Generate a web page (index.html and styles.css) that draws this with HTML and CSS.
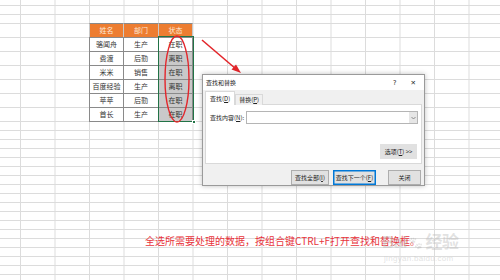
FILE: index.html
```html
<!DOCTYPE html>
<html lang="zh">
<head>
<meta charset="utf-8">
<link rel="stylesheet" href="styles.css">
</head>
<body>
<div class="sheet">
  <div class="row first"></div>
  <div class="row"></div>
  <div class="row"></div>
  <div class="trow">
    <div class="cell hd">姓名</div><div class="cell hd">部门</div><div class="cell hd">状态</div>
  </div>
  <div class="trow">
    <div class="cell">骆闻舟</div><div class="cell">生产</div><div class="cell">在职</div>
  </div>
  <div class="trow">
    <div class="cell">费渡</div><div class="cell">后勤</div><div class="cell sel">离职</div>
  </div>
  <div class="trow">
    <div class="cell">米米</div><div class="cell">销售</div><div class="cell sel">在职</div>
  </div>
  <div class="trow">
    <div class="cell">百度经验</div><div class="cell">生产</div><div class="cell sel">离职</div>
  </div>
  <div class="trow">
    <div class="cell">苹苹</div><div class="cell">后勤</div><div class="cell sel">在职</div>
  </div>
  <div class="trow">
    <div class="cell">首长</div><div class="cell">生产</div><div class="cell sel">在职</div>
  </div>
  <div class="row"></div><div class="row"></div><div class="row"></div><div class="row"></div>
  <div class="row"></div><div class="row"></div><div class="row"></div><div class="row"></div>
  <div class="row"></div><div class="row"></div><div class="row"></div><div class="row"></div>
  <div class="row"></div><div class="row"></div><div class="row"></div><div class="row"></div>
  <div class="row"></div><div class="row"></div>

  <div class="selection"><span class="handle"></span></div>

  <svg class="marks" width="500" height="280" viewBox="0 0 500 280">
    <ellipse cx="177" cy="79" rx="12" ry="43" fill="none" stroke="#e3262b" stroke-width="1.4"/>
    <line x1="202" y1="40" x2="236" y2="69" stroke="#e3262b" stroke-width="1.6"/>
    <polygon points="241,73 231.5,69.5 236,64.5" fill="#e3262b"/>
  </svg>

  <div class="dialog">
    <div class="titlebar">
      <span class="title">查找和替换</span>
      <span class="tb-btns"><span class="help">?</span><span class="x">✕</span></span>
    </div>
    <div class="dbody">
      <div class="tabs">
        <span class="tab active">查找(<u>D</u>)</span><span class="tab">替换(<u>P</u>)</span>
      </div>
      <div class="panel">
        <div class="field">
          <span class="label">查找内容(<u>N</u>):</span>
          <div class="combo"><span class="drop"><svg width="5" height="4" viewBox="0 0 5 4"><path d="M0.5 1 L2.5 3 L4.5 1" fill="none" stroke="#777" stroke-width="0.8"/></svg></span></div>
        </div>
        <div class="opts"><span class="btn optbtn">选项(<u>T</u>) &gt;&gt;</span></div>
      </div>
      <div class="actions">
        <span class="btn b1">查找全部(<u>I</u>)</span>
        <span class="btn b2 primary">查找下一个(<u>F</u>)</span>
        <span class="btn b3">关闭</span>
      </div>
    </div>
  </div>

  <p class="caption">全选所需要处理的数据，按组合键CTRL+F打开查找和替换框。</p>

  <div class="watermark">
    <div class="wm-logo">Bai<span class="paw">🐾</span>经验</div>
    <div class="wm-url">jingyan.baidu.com</div>
  </div>
</div>
</body>
</html>
```
FILE: styles.css
```css
* { box-sizing: border-box; }
html, body { margin: 0; padding: 0; }
body {
  width: 500px;
  height: 280px;
  overflow: hidden;
  background: #fff;
  font-family: "Noto Sans CJK SC", "Noto Sans", sans-serif;
}
.sheet {
  position: relative;
  width: 500px;
  height: 280px;
  overflow: hidden;
  background-color: #fff;
  background-image: linear-gradient(to right, #dcdcdc 1px, transparent 1px);
  background-size: 34.5px 100%;
  background-position: 20px 0;
}
.row {
  height: 9px;
  border-bottom: 1px solid #dcdcdc;
}
.row.first { height: 6px; }
.trow {
  height: 14px;
  border-bottom: 1px solid #dcdcdc;
  display: flex;
  padding-left: 89px;
}
.cell {
  width: 35px;
  height: 15px;
  margin-top: -1px;
  border: 1px solid #8a8a8a;
  border-left: none;
  background: #fff;
  color: #333;
  font-size: 7px;
  line-height: 13px;
  text-align: center;
  white-space: nowrap;
}
.cell:first-child { border-left: 1px solid #8a8a8a; }
.cell:last-child { width: 34px; }
.cell.hd {
  background: #ed7d31;
  color: #fde9d9;
  border-color: #c9c9c9;
  border-top-color: #8a8a8a;
}
.cell.sel { background: #c9c9c9; }

.selection {
  position: absolute;
  left: 158px;
  top: 36px;
  width: 36px;
  height: 86px;
  border: 1.5px solid #217346;
}
.handle {
  position: absolute;
  right: -3px;
  bottom: -3px;
  width: 4px;
  height: 4px;
  background: #217346;
  border: 1px solid #fff;
}
.marks {
  position: absolute;
  left: 0;
  top: 0;
}

/* dialog */
.dialog {
  position: absolute;
  left: 202px;
  top: 74px;
  width: 223px;
  height: 112px;
  background: #f0f0f0;
  border: 1px solid #9a9a9a;
  box-shadow: 0 0 5px rgba(0, 0, 0, 0.25);
  font-size: 6px;
  color: #222;
  display: flex;
  flex-direction: column;
}
.titlebar {
  height: 15px;
  background: #fff;
  display: flex;
  align-items: center;
  justify-content: space-between;
  padding: 0 8px 0 3px;
}
.title { font-size: 6px; }
.tb-btns { display: flex; gap: 14px; align-items: center; }
.help { font-size: 6.5px; font-family: "DejaVu Sans", sans-serif; }
.x { font-size: 6.5px; font-family: "DejaVu Sans", sans-serif; }
.dbody {
  flex: 1;
  padding: 2px 2px 0 2px;
  display: flex;
  flex-direction: column;
}
.tabs {
  display: flex;
  align-items: flex-end;
  height: 13px;
  margin-bottom: -1px;
  position: relative;
  z-index: 1;
}
.tab {
  height: 11px;
  line-height: 10px;
  padding: 0 3px;
  border: 1px solid #d9d9d9;
  border-bottom: none;
  background: #f0f0f0;
}
.tab.active {
  height: 14px;
  line-height: 13px;
  background: #fff;
  border-color: #d9d9d9;
  padding: 0 4px;
}
.panel {
  height: 60px;
  background: #fff;
  border: 1px solid #d9d9d9;
  padding: 6px 3px 0 3px;
  display: flex;
  flex-direction: column;
}
.field {
  display: flex;
  align-items: center;
  height: 13px;
}
.label {
  width: 37px;
  padding-left: 1px;
  white-space: nowrap;
}
.combo {
  flex: 1;
  height: 13px;
  border: 1px solid #b5b5b5;
  background: #fff;
  display: flex;
  justify-content: flex-end;
  margin-right: 0;
}
.drop {
  width: 8px;
  height: 11px;
  background: #e6e6e6;
  display: flex;
  align-items: center;
  justify-content: center;
}
.opts {
  display: flex;
  justify-content: flex-end;
  margin-top: 20px;
  padding-right: 1px;
}
.btn {
  display: flex;
  align-items: center;
  justify-content: center;
  height: 15px;
  background: #e1e1e1;
  border: 1px solid #adadad;
  white-space: nowrap;
  font-size: 6px;
}
.optbtn {
  width: 37px;
  border-color: #e1e1e1;
}
.actions {
  display: flex;
  justify-content: flex-end;
  margin-top: 6px;
  padding-right: 1px;
}
.b1 { width: 38px; }
.b2 { width: 43px; margin-left: 4px; }
.b3 { width: 33px; margin-left: 12px; }
.primary {
  border-color: #0078d7;
  box-shadow: inset 0 0 0 0.5px #0078d7;
}

.caption {
  position: absolute;
  left: 145px;
  top: 234px;
  margin: 0;
  font-size: 10px;
  line-height: 14px;
  color: #e8333b;
  white-space: nowrap;
  font-family: "Noto Sans CJK SC", sans-serif;
}
.watermark {
  position: absolute;
  left: 382px;
  top: 232px;
  color: rgba(190, 190, 190, 0.45);
  font-family: "Liberation Sans", "Noto Sans CJK SC", sans-serif;
}
.wm-logo {
  font-size: 17px;
  font-weight: bold;
  line-height: 22px;
  letter-spacing: -0.5px;
  display: flex;
  align-items: center;
}
.paw {
  font-size: 12px;
  margin: 0 3px 0 1px;
  filter: grayscale(1) opacity(0.35);
}
.wm-url {
  font-size: 8px;
  line-height: 10px;
  padding-left: 2px;
  letter-spacing: 0.3px;
}
```
